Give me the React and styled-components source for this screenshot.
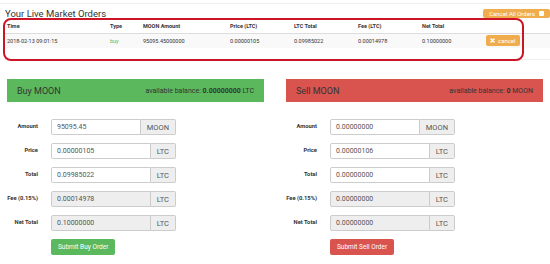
import React from 'react'
import styled, { createGlobalStyle } from 'styled-components'

const GlobalStyle = createGlobalStyle`
    html, body {
        margin: 0;
        padding: 0;
        background: #fff;
    }
    body {
        font-family: Roboto, "Liberation Sans", Arial, sans-serif;
        color: #333;
    }
    * {
        box-sizing: border-box;
    }
`

const Colors = {
    green: '#5cb85c',
    red: '#d9534f',
    orange: '#f0ad4e',
    border: '#ccc',
    addon: '#eee',
    highlight: '#cc1426',
}

const Page = styled.div`
    width: 550px;
    height: 264px;
    padding-top: 3px;
    overflow: hidden;
`

const OrdersSection = styled.section`
    position: relative;
    border-top: 1px solid #eee;
    padding-left: 5px;
`

const OrdersHeader = styled.div`
    height: 16px;
    display: flex;
    justify-content: space-between;
    align-items: flex-end;
`

const Title = styled.h3`
    margin: 0;
    font-size: 9.5px;
    line-height: 12px;
    font-weight: 400;
    color: #333;
`

const SmallButton = styled.button`
    display: inline-flex;
    align-items: center;
    gap: ${({ $gap }) => $gap || 3}px;
    border: 0;
    border-radius: 2px;
    background: ${({ $color }) => $color};
    color: #fff;
    font-family: inherit;
    font-size: 6px;
    padding: 0 ${({ $pad }) => $pad || 4}px;
    height: ${({ $height }) => $height}px;
    margin-bottom: ${({ $bottom }) => $bottom || 0}px;
    line-height: 1;
`

const StopIcon = styled.span`
    display: inline-block;
    width: 5px;
    height: 5px;
    border-radius: 1px;
    background: #fff;
`

const TableWrap = styled.div`
    height: 40px;
    border-bottom: 1px solid #eee;
`

const Table = styled.table`
    width: 545px;
    border-collapse: collapse;
    table-layout: fixed;
    font-size: 5.5px;
    color: #333;
`

const Th = styled.th`
    text-align: left;
    font-weight: 700;
    padding: 0 2px;
    height: 13px;
    border-bottom: 1px solid #ddd;
`

const Tr = styled.tr`
    background: #f9f9f9;
`

const Td = styled.td`
    padding: 0 2px;
    height: 15px;
    color: ${({ $color }) => $color || '#333'};
`

const Highlight = styled.div`
    position: absolute;
    left: 3px;
    top: 14px;
    width: 521px;
    height: 43px;
    border: 2px solid ${Colors.highlight};
    border-radius: 8px;
    pointer-events: none;
`

const TradeGrid = styled.div`
    display: grid;
    grid-template-columns: 1fr 1fr;
    column-gap: 22px;
    padding: 0 7px;
    margin-top: 19px;
`

const PanelHeading = styled.div`
    height: 23px;
    padding: 0 10px;
    display: flex;
    align-items: center;
    justify-content: space-between;
    background: ${({ $color }) => $color};
    color: #333;
`

const PanelTitle = styled.span`
    font-size: 9px;
`

const Balance = styled.span`
    font-size: 7px;
    color: #333;

    b {
        font-weight: 700;
    }
`

const Form = styled.div`
    margin-top: 17px;
    display: grid;
    grid-template-columns: 31px 125px;
    column-gap: 13px;
    row-gap: 8px;
`

const Label = styled.label`
    font-size: 5.8px;
    font-weight: 700;
    text-align: right;
    align-self: center;
    margin-bottom: 2px;
    color: #333;
`

const InputGroup = styled.div`
    display: flex;
    height: 16px;
`

const Input = styled.div`
    flex: 1;
    display: flex;
    align-items: center;
    padding: 0 5px;
    border: 1px solid ${Colors.border};
    border-radius: 2px 0 0 2px;
    background: ${({ $disabled }) => ($disabled ? Colors.addon : '#fff')};
    font-size: 7px;
    color: #555;
`

const Addon = styled.div`
    display: flex;
    align-items: center;
    padding: 0 6px;
    border: 1px solid ${Colors.border};
    border-left: 0;
    border-radius: 0 2px 2px 0;
    background: ${Colors.addon};
    font-size: 7.5px;
    color: #555;
`

const SubmitButton = styled.button`
    grid-column: 2;
    justify-self: start;
    height: 16px;
    padding: 0 7px;
    border: 0;
    border-radius: 2px;
    background: ${({ $color }) => $color};
    color: #fff;
    font-family: inherit;
    font-size: 6.5px;
`

function CrossIcon() {
    return (
        <svg width="5" height="5" viewBox="0 0 10 10">
            <path d="M2 2 L8 8 M8 2 L2 8" stroke="#fff" strokeWidth="3" strokeLinecap="round" />
        </svg>
    )
}

const columns = [
    ['Time', 103],
    ['Type', 33],
    ['MOON Amount', 87],
    ['Price (LTC)', 64],
    ['LTC Total', 64],
    ['Fee (LTC)', 64],
    ['Net Total', 64],
    ['', 66],
]

function TradeForm({ side, color, balance, unit, values, buttonText }) {
    const rows = [
        ['Amount', values[0], 'MOON', false],
        ['Price', values[1], 'LTC', false],
        ['Total', values[2], 'LTC', false],
        ['Fee (0.15%)', values[3], 'LTC', true],
        ['Net Total', values[4], 'LTC', true],
    ]
    return (
        <div>
            <PanelHeading $color={color}>
                <PanelTitle>{side} MOON</PanelTitle>
                <Balance>available balance: <b>{balance}</b> {unit}</Balance>
            </PanelHeading>
            <Form>
                {rows.map(([label, value, addon, disabled]) => (
                    <React.Fragment key={label}>
                        <Label>{label}</Label>
                        <InputGroup>
                            <Input $disabled={disabled}>{value}</Input>
                            <Addon>{addon}</Addon>
                        </InputGroup>
                    </React.Fragment>
                ))}
                <SubmitButton $color={color}>{buttonText}</SubmitButton>
            </Form>
        </div>
    )
}

export default function App() {
    return (
        <Page>
            <GlobalStyle />
            <OrdersSection>
                <OrdersHeader>
                    <Title>Your Live Market Orders</Title>
                    <SmallButton $color={Colors.orange} $height={9} $pad={6} $gap={4} $bottom={2}>
                        Cancel All Orders <StopIcon />
                    </SmallButton>
                </OrdersHeader>
                <TableWrap>
                    <Table>
                        <colgroup>
                            {columns.map(([name, w], i) => <col key={i} style={{ width: w }} />)}
                        </colgroup>
                        <thead>
                            <tr>
                                {columns.map(([name], i) => <Th key={i}>{name}</Th>)}
                            </tr>
                        </thead>
                        <tbody>
                            <Tr>
                                <Td>2018-02-13 09:01:15</Td>
                                <Td $color={Colors.green}>buy</Td>
                                <Td>95095.45000000</Td>
                                <Td>0.00000105</Td>
                                <Td>0.09985022</Td>
                                <Td>0.00014978</Td>
                                <Td>0.10000000</Td>
                                <Td>
                                    <SmallButton $color={Colors.orange} $height={11} $pad={4}>
                                        <CrossIcon /> cancel
                                    </SmallButton>
                                </Td>
                            </Tr>
                        </tbody>
                    </Table>
                </TableWrap>
                <Highlight />
            </OrdersSection>
            <TradeGrid>
                <TradeForm
                    side="Buy"
                    color={Colors.green}
                    balance="0.00000000"
                    unit="LTC"
                    values={['95095.45', '0.00000105', '0.09985022', '0.00014978', '0.10000000']}
                    buttonText="Submit Buy Order"
                />
                <TradeForm
                    side="Sell"
                    color={Colors.red}
                    balance="0"
                    unit="MOON"
                    values={['0.00000000', '0.00000106', '0.00000000', '0.00000000', '0.00000000']}
                    buttonText="Submit Sell Order"
                />
            </TradeGrid>
        </Page>
    )
}
